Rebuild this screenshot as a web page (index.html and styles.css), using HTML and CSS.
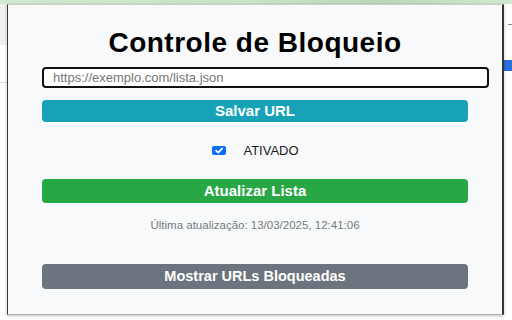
FILE: index.html
```html
<!DOCTYPE html>
<html lang="pt-BR">
<head>
<meta charset="utf-8">
<title>Controle de Bloqueio</title>
<link rel="stylesheet" href="styles.css">
</head>
<body>
<div class="page">
  <div class="topband"></div>
  <div class="bar">
    <div class="bar-left"></div>
    <div class="bar-right"><span class="dash"></span></div>
  </div>
  <div class="row2">
    <div class="row2-left"></div>
    <div class="row2-right"><span class="bluebtn"></span></div>
  </div>
</div>

<div class="popup">
  <h1 class="title">Controle de Bloqueio</h1>
  <input class="url-input" type="text" placeholder="https://exemplo.com/lista.json">
  <button class="btn btn-info">Salvar URL</button>
  <label class="toggle">
    <span class="check">
      <svg width="14" height="9" viewBox="0 0 14 9"><rect x="0" y="0" width="14" height="9" rx="2" fill="#0b6cf5"/><path d="M4 4.6 L6.2 6.6 L10.2 2.4" fill="none" stroke="#fff" stroke-width="1.7" stroke-linecap="round" stroke-linejoin="round"/></svg>
    </span>
    <span class="toggle-text">ATIVADO</span>
  </label>
  <button class="btn btn-success">Atualizar Lista</button>
  <p class="updated">Última atualização: 13/03/2025, 12:41:06</p>
  <button class="btn btn-secondary">Mostrar URLs Bloqueadas</button>
</div>
</body>
</html>
```

FILE: styles.css
```css
html, body {
  margin: 0;
  padding: 0;
}
body {
  width: 512px;
  height: 320px;
  overflow: hidden;
  background: #ffffff;
  position: relative;
  font-family: "Liberation Sans", Arial, sans-serif;
}

/* background page */
.page {
  display: flex;
  flex-direction: column;
}
.topband {
  height: 4px;
  background: linear-gradient(90deg, #d3e8d3, #c9e2c9 50%, #b9d9b9 75%, #d3e8d3);
}
.bar {
  height: 41px;
  display: flex;
  justify-content: space-between;
}
.bar-left {
  width: 7px;
  background: #eef1ee;
}
.bar-right {
  width: 8px;
  display: flex;
  align-items: center;
  justify-content: flex-end;
}
.dash {
  width: 4px;
  height: 1px;
  background: #888;
}
.row2 {
  height: 38px;
  display: flex;
  justify-content: space-between;
}
.row2-left {
  width: 7px;
  border-bottom: 1px solid #dcdcdc;
}
.row2-right {
  width: 8px;
  padding-top: 15px;
}
.bluebtn {
  display: block;
  height: 11px;
  background: #2a6fe0;
}

/* popup window */
.popup {
  position: absolute;
  left: 7px;
  top: 4px;
  width: 497px;
  height: 311px;
  box-sizing: border-box;
  background: #f8f9fa;
  border-left: 1px solid #3a3a3a;
  border-right: 2px solid #2e3a2e;
  border-top: 1px solid #c8cfc8;
  border-bottom: 1px solid #b0b0b0;
  box-shadow: 0 1px 3px rgba(0, 0, 0, 0.25);
  padding: 23px 34px 0 34px;
  display: flex;
  flex-direction: column;
}

.title {
  margin: 0;
  height: 30px;
  font-size: 28px;
  line-height: 30px;
  letter-spacing: 0.5px;
  font-weight: bold;
  color: #000;
  text-align: center;
}

.url-input {
  margin: 9px 0 0 0;
  width: calc(100% + 21px);
  height: 21px;
  box-sizing: border-box;
  border: 2px solid #111;
  border-radius: 4px;
  padding: 0 9px;
  font-family: "Liberation Sans", Arial, sans-serif;
  font-size: 13px;
  color: #222;
  background: #fff;
  outline: none;
}
.url-input::placeholder {
  color: #767676;
}

.btn {
  display: block;
  width: 100%;
  box-sizing: border-box;
  border: none;
  border-radius: 4px;
  color: #fff;
  font-family: "Liberation Sans", Arial, sans-serif;
  font-weight: bold;
  font-size: 15px;
  padding: 0;
  text-align: center;
}
.btn-info {
  margin-top: 12px;
  height: 22px;
  line-height: 22px;
  background: #17a2b8;
}
.btn-success {
  margin-top: 21px;
  height: 24px;
  line-height: 24px;
  background: #28a745;
}
.btn-secondary {
  margin-top: 32px;
  height: 25px;
  line-height: 25px;
  background: #6c757d;
  font-size: 14.5px;
}

.toggle {
  margin-top: 20px;
  height: 16px;
  display: flex;
  align-items: center;
  justify-content: center;
  gap: 17px;
}
.check {
  display: flex;
  width: 14px;
  height: 9px;
  margin-left: 1px;
}
.toggle-text {
  font-size: 13px;
  color: #1a1a1a;
  line-height: 16px;
  padding-top: 2px;
}

.updated {
  margin: 15px 0 0 0;
  height: 14px;
  line-height: 14px;
  font-size: 11.5px;
  color: #747b80;
  text-align: center;
}
```
